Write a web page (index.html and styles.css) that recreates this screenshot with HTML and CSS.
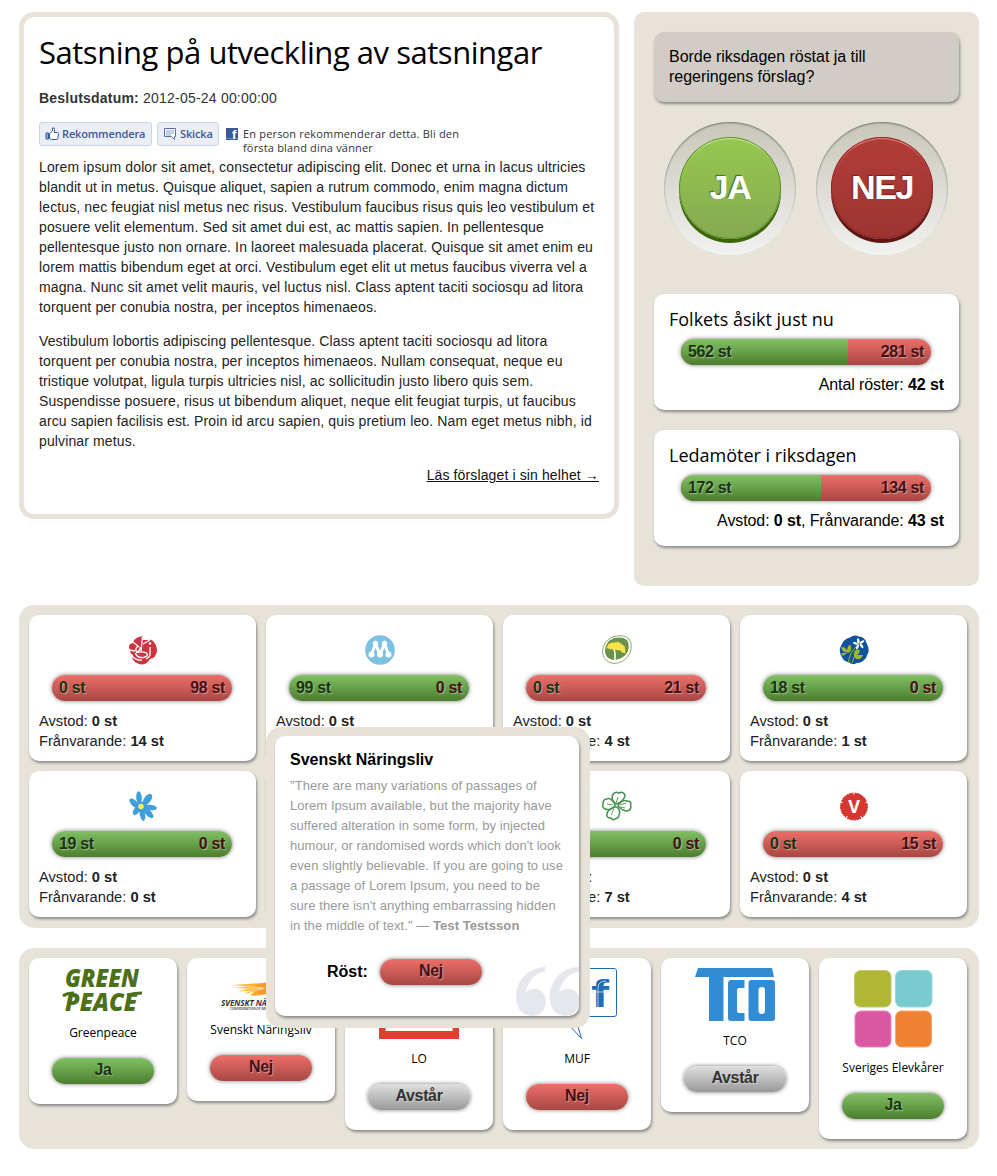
FILE: index.html
```html
<!DOCTYPE html>
<html lang="sv">
<head>
<meta charset="utf-8">
<title>Satsning på utveckling av satsningar</title>
<link rel="stylesheet" href="styles.css">
</head>
<body>
<div class="page">
  <div class="top">
    <article class="proposal">
      <h1>Satsning på utveckling av satsningar</h1>
      <p class="date"><b>Beslutsdatum:</b> 2012-05-24 00:00:00</p>
      <div class="social">
        <a class="fb-button like"><svg width="14" height="14" viewBox="0 0 14 14"><path d="M1 6h2.500v6H1z" fill="#8ea2cc" stroke="#3b5998"/><path d="M4.500 6.500 7.500 4V1q2-1 2 1.500V5.500h3q1 0 1 1.200l-.7 5q-.2.800-1 .8H6.500l-2-1z" fill="#fff" stroke="#3b5998"/></svg><span>Rekommendera</span></a>
        <a class="fb-button send"><svg width="14" height="14" viewBox="0 0 14 14"><path d="M1.500 1.500h11v8h-1v3l-3-3h-7z" fill="#fff" stroke="#5470a8"/><path d="M3 4h8M3 6h8M3 8h5" stroke="#8d9fc5"/></svg><span>Skicka</span></a>
        <svg class="fb-logo" width="12" height="12" viewBox="0 0 12 12"><path d="M0 0h12v12H0z" fill="#3b5998"/><path d="M0 10.500h12" stroke="#7489b8"/><text x="6" y="11" class="fb-f">f</text></svg>
        <p class="fb-text">En person rekommenderar detta. Bli den<br>första bland dina vänner</p>
      </div>
      <p class="body-text">Lorem ipsum dolor sit amet, consectetur adipiscing elit. Donec et urna in lacus ultricies<br>blandit ut in metus. Quisque aliquet, sapien a rutrum commodo, enim magna dictum<br>lectus, nec feugiat nisl metus nec risus. Vestibulum faucibus risus quis leo vestibulum et<br>posuere velit elementum. Sed sit amet dui est, ac mattis sapien. In pellentesque<br>pellentesque justo non ornare. In laoreet malesuada placerat. Quisque sit amet enim eu<br>lorem mattis bibendum eget at orci. Vestibulum eget elit ut metus faucibus viverra vel a<br>magna. Nunc sit amet velit mauris, vel luctus nisl. Class aptent taciti sociosqu ad litora<br>torquent per conubia nostra, per inceptos himenaeos.</p>
      <p class="body-text">Vestibulum lobortis adipiscing pellentesque. Class aptent taciti sociosqu ad litora<br>torquent per conubia nostra, per inceptos himenaeos. Nullam consequat, neque eu<br>tristique volutpat, ligula turpis ultricies nisl, ac sollicitudin justo libero quis sem.<br>Suspendisse posuere, risus ut bibendum aliquet, neque elit feugiat turpis, ut faucibus<br>arcu sapien facilisis est. Proin id arcu sapien, quis pretium leo. Nam eget metus nibh, id<br>pulvinar metus.</p>
      <p class="more"><a>Läs förslaget i sin helhet →</a></p>
    </article>

    <aside class="vote">
      <div class="question">Borde riksdagen röstat ja till<br>regeringens förslag?</div>
      <div class="buttons">
        <div class="ring"><div class="round yes">JA</div></div>
        <div class="ring"><div class="round no">NEJ</div></div>
      </div>
      <section class="result">
        <h2>Folkets åsikt just nu</h2>
        <div class="bar red"><i class="green" style="width:66.8%"></i><b class="for">562 st</b><b class="against">281 st</b></div>
        <p>Antal röster: <b>42 st</b></p>
      </section>
      <section class="result">
        <h2>Ledamöter i riksdagen</h2>
        <div class="bar red"><i class="green" style="width:56%"></i><b class="for">172 st</b><b class="against">134 st</b></div>
        <p>Avstod: <b>0 st</b>, Frånvarande: <b>43 st</b></p>
      </section>
    </aside>
  </div>

  <div class="parties">
    <div class="party">
      <svg viewBox="0 0 30 30"><path d="M6 5Q9 2 14 1L15 0V5L20 5Q23 4 25 6Q29 10 29 16Q28 23 22 24Q19 29.500 13 29.500Q6 28 4 23L5 20Q2 19 2 15Q0 12 2 9Q5 9 6 5z" fill="#cf3340"/><path d="M14.500 1 13 17M5 7l6 5M15 9l7-4M1 15l6 1M10.500 11q-4 2-2 6 4-1 3.500-5M7.500 18q1 5 8 4.500 6-1.500 3-4.500-4-2-10-.5M3 20q5 6 11 5M22 12v8q-1 3-4 4" fill="none" stroke="#fff" stroke-width="1.300"/><circle cx="22" cy="8.500" r="1.300" fill="#fff"/></svg>
      <div class="bar red"><b class="for">0 st</b><b class="against">98 st</b></div>
      <p>Avstod: <b>0 st</b><br>Frånvarande: <b>14 st</b></p>
    </div>
    <div class="party">
      <svg viewBox="0 0 30 30"><circle cx="15" cy="15" r="14.800" fill="#7cc0e2"/><g fill="#fff"><circle cx="10.500" cy="8.500" r="2.700"/><circle cx="19.500" cy="8.500" r="2.700"/><circle cx="6.500" cy="19.500" r="3"/><circle cx="15" cy="19.500" r="3"/><circle cx="23.500" cy="19.500" r="3"/></g><path d="M6.500 19 10.500 9 15 19.500 19.500 9 23.500 19" fill="none" stroke="#fff" stroke-width="3"/></svg>
      <div class="bar green"><b class="for">99 st</b><b class="against">0 st</b></div>
      <p>Avstod: <b>0 st</b><br>Frånvarande: <b>8 st</b></p>
    </div>
    <div class="party">
      <svg viewBox="0 0 30 30"><path d="M.500 17Q1 5 12 1.500Q22-1 27 4Q31 9 28 18Q23 28 12 28.500Q1 27 .500 17z" fill="#fff" stroke="#75974b" stroke-width=".8"/><path d="M3 16Q3 7 11 3.500Q20 1 25 5Q28.500 11 25 18Q20 25 11 25Q3 23 3 16z" fill="#6a9248"/><path d="M12.500 25.500Q14 21 12 14" fill="none" stroke="#fff" stroke-width="1.600"/><path d="M5 13l1-3 3-2 3 0 4-1 3 2 3 2 1 3 0 4-3-1-2-2-3 0-3-1-4 0-2-1z" fill="#fce148" stroke="#fce148" stroke-dasharray="1 .6"/></svg>
      <div class="bar red"><b class="for">0 st</b><b class="against">21 st</b></div>
      <p>Avstod: <b>0 st</b><br>Frånvarande: <b>4 st</b></p>
    </div>
    <div class="party">
      <svg viewBox="0 0 30 30"><path d="M4 7Q7 3 11 2.500Q15-1 20 1.500Q26 2 27.500 8Q30 12 29.500 17Q28 20 27 23Q23 28 18 28Q14 30.500 10 27.500Q4 26 3 22Q0 18 1 13z" fill="#10529d"/><path d="M9.500 28Q10 18 18 11M13 28l3-8" fill="none" stroke="#a3b928"/><path d="M2 12.500q5-1 6 4 0-5 3-7 3 5-1 8-6 1-8-5M15 18q1-5 6-3 0 3-3 5l6 0q-2 5-6 4-4-1-3-6M2 18l6 0-4 3z" fill="#a3b928"/><g fill="#fff"><ellipse cx="19.300" cy="6" rx="1.300" ry="2.700" transform="rotate(-10 19.300 6)"/><ellipse cx="23" cy="7" rx="1.200" ry="2.500" transform="rotate(60 23 7)"/><ellipse cx="22.500" cy="10.800" rx="1.200" ry="2.800" transform="rotate(-35 22.500 10.800)"/><ellipse cx="18.500" cy="11.800" rx="1.200" ry="2.800" transform="rotate(25 18.500 11.800)"/><ellipse cx="16.500" cy="8.300" rx="1.200" ry="2.700" transform="rotate(-75 16.500 8.300)"/></g><circle cx="19.800" cy="8.800" r="1" fill="#92a955"/></svg>
      <div class="bar green"><b class="for">18 st</b><b class="against">0 st</b></div>
      <p>Avstod: <b>0 st</b><br>Frånvarande: <b>1 st</b></p>
    </div>
    <div class="party">
      <svg viewBox="0 0 30 30"><g fill="#3f9fdd"><ellipse cx="11" cy="6.500" rx="2.800" ry="6.300" transform="rotate(-4 11 6.500)"/><ellipse cx="19.500" cy="8.500" rx="3.500" ry="6.500" transform="rotate(36 19.500 8.500)"/><ellipse cx="22" cy="16.500" rx="7" ry="2.800" transform="rotate(5 22 16.500)"/><ellipse cx="20.500" cy="22" rx="2.900" ry="6.500" transform="rotate(-43 20.500 22)"/><ellipse cx="14.500" cy="23.500" rx="2.700" ry="6.500" transform="rotate(-10 14.500 23.500)"/><ellipse cx="8.500" cy="19.500" rx="2.800" ry="5" transform="rotate(32 8.500 19.500)"/><ellipse cx="6.500" cy="12.500" rx="3" ry="6.500" transform="rotate(-46 6.500 12.500)"/><circle cx="13.500" cy="16" r="5.500"/></g><circle cx="13" cy="15.500" r="2.700" fill="#fff04d"/></svg>
      <div class="bar green"><b class="for">19 st</b><b class="against">0 st</b></div>
      <p>Avstod: <b>0 st</b><br>Frånvarande: <b>0 st</b></p>
    </div>
    <div class="party">
      <svg viewBox="0 0 30 30"></svg>
      <div class="bar green"><b class="for">20 st</b><b class="against">0 st</b></div>
      <p>Avstod: <b>0 st</b><br>Frånvarande: <b>4 st</b></p>
    </div>
    <div class="party">
      <svg viewBox="0 0 30 30"><g fill="none" stroke="#43914c" stroke-width="1.500"><path d="M14 13Q9 9 10.500 4Q13 0 17 2Q21 0 23 4Q23 8 17 12z"/><path d="M16 14Q21 8 25 10Q30 10 28.500 14Q30 19 25 20Q21 20 17 16z"/><path d="M15 16Q19 20 17 24Q17 27 13 28Q11 30 9 27Q4 27 5 23Q5 19 13 16z"/><path d="M13 15Q7 20 3 18Q0 17 1 13Q1 8 5 8Q8 6 13 13z"/><path d="M14 12 16 6M18 14l6-2M18 16l5 1M12 18l-3 6M11 14l-6-1" stroke-width=".9"/></g></svg>
      <div class="bar green"><b class="for">17 st</b><b class="against">0 st</b></div>
      <p>Avstod: <b>0 st</b><br>Frånvarande: <b>7 st</b></p>
    </div>
    <div class="party">
      <svg viewBox="0 0 30 30"><circle cx="15" cy="15.500" r="13.300" fill="#d5362f"/><circle cx="15" cy="15.500" r="13.300" fill="none" stroke="#d5362f" stroke-width="1.300" stroke-dasharray="2 .6"/><path d="M15 1v2.500M29 11l-2.500 .8M23.500 28l-2-3M6.500 28l2-3M1 11l2.500 .8" stroke="#fff" stroke-width="1"/><text x="15" y="21.500" class="v-mark">V</text></svg>
      <div class="bar red"><b class="for">0 st</b><b class="against">15 st</b></div>
      <p>Avstod: <b>0 st</b><br>Frånvarande: <b>4 st</b></p>
    </div>
  </div>

  <div class="orgs">
    <div class="org">
      <svg class="gp-logo" width="80" height="45" viewBox="0 0 80 45"><g class="gp"><text x="2" y="19" textLength="74" lengthAdjust="spacingAndGlyphs">GREEN</text><text x="2" y="43" textLength="72" lengthAdjust="spacingAndGlyphs">PEACE</text></g><path d="M0 28Q4 25 11 25M64 27q8-2 15-2" fill="none" stroke="#4c7018" stroke-width="3"/></svg>
      <h3>Greenpeace</h3>
      <div class="bar green answer">Ja</div>
    </div>
    <div class="org">
      <svg width="80" height="42" viewBox="0 0 80 42"><defs><linearGradient id="sun" gradientUnits="userSpaceOnUse" x1="9" y1="0" x2="60" y2="0"><stop stop-color="#fddc43"/><stop offset=".6" stop-color="#f7a023"/><stop offset="1" stop-color="#ef7b19"/></linearGradient></defs><path d="M10 17l16 1.500-14 1.500 15 .5-10 3 13-1-8 4 11-3-4 4q14 1 25-5 8-4 9-12-16 5-30 5z" fill="url(#sun)"/><path d="M24 18.500l20 1.500M25 21l18-.5M29 23.500l13-2.500" stroke="#fff" stroke-width=".5"/><text x="0" y="37.500" class="sn">SVENSKT NÄRINGSLIV</text><text x="9" y="41.500" class="sn-sub">CONFEDERATION OF SWEDISH</text></svg>
      <h3>Svenskt Näringsliv</h3>
      <div class="bar red answer">Nej</div>
    </div>
    <div class="org">
      <svg width="80" height="71" viewBox="0 0 80 71"><path d="M0 0h80v71H0z" fill="#e63c32"/><path d="M6.500 6h67v57h-67z" fill="#fff"/><path d="M0 0h80v60H0z" fill="#e63c32"/></svg>
      <h3>LO</h3>
      <div class="bar grey answer">Avstår</div>
    </div>
    <div class="org">
      <svg width="80" height="71" viewBox="0 0 80 71"><path d="M3 .500h74q2.500 0 2.500 2v44q0 2-2.500 2H38l6.500 22-17-18-9-4H3q-2.500 0-2.500-2v-44q0-2 2.500-2z" fill="#fff" stroke="#1e6cb5"/><text x="7" y="38" class="muf">mu</text><text x="54" y="39" class="muf f" textLength="18" lengthAdjust="spacingAndGlyphs">f</text><path d="M61 39V20q0-7 8-7M55 24h17" fill="none" stroke="#d3e4f3" stroke-width=".8"/></svg>
      <h3>MUF</h3>
      <div class="bar red answer">Nej</div>
    </div>
    <div class="org">
      <svg width="80" height="53" viewBox="0 0 80 53"><path d="M3 0h74l2 9H0z" fill="#318cd4"/><path d="M14 8h14.500v45H14z" fill="#318cd4"/><rect x="53.500" y="12" width="26.500" height="41" rx="3" fill="#318cd4"/><rect x="63.500" y="19" width="6.500" height="27" rx="3.200" fill="#fff"/><path d="M49.500 12H36Q33 12 33 15.500V50q0 3 3 3h13.500v-8H44q-2 0-2-3V23q0-3 2-3h5.500z" fill="#318cd4"/></svg>
      <h3>TCO</h3>
      <div class="bar grey answer">Avstår</div>
    </div>
    <div class="org">
      <svg width="80" height="80" viewBox="0 0 80 80"><g stroke-width="1"><rect x="1.500" y="2.500" width="36.500" height="36.500" rx="6" fill="#afb735" stroke="#c2c96b"/><rect x="42.500" y="2.500" width="36.500" height="36.500" rx="6" fill="#77cbd1" stroke="#9adadd"/><rect x="2" y="43" width="36" height="36" rx="6" fill="#da57a2" stroke="#e384bb"/><rect x="42.500" y="43" width="36" height="36" rx="6" fill="#ef8232" stroke="#f5a56e"/></g></svg>
      <h3>Sveriges Elevkårer</h3>
      <div class="bar green answer">Ja</div>
    </div>

    <div class="popup">
      <div class="popup-card">
        <h4>Svenskt Näringsliv</h4>
        <p class="quote">"There are many variations of passages of<br>Lorem Ipsum available, but the majority have<br>suffered alteration in some form, by injected<br>humour, or randomised words which don't look<br>even slightly believable. If you are going to use<br>a passage of Lorem Ipsum, you need to be<br>sure there isn't anything embarrassing hidden<br>in the middle of text." — <b>Test Testsson</b></p>
        <div class="ballot"><b>Röst:</b><div class="bar red answer">Nej</div></div>
        <svg class="marks" width="63" height="49" viewBox="0 0 63 49"><defs><path id="mark" d="M29.500 0V4.500C19 6 12.500 14 9.500 25Q14 21.500 20 22Q30 24 30 35Q29 48 16 49Q1 48 0 30C1 12 12 1 29.500 0z"/></defs><g fill="#e6e7ec"><use href="#mark"/><use href="#mark" x="33.500"/></g></svg>
      </div>
    </div>
  </div>
</div>
</body>
</html>
```
FILE: styles.css
```css
* { box-sizing: border-box; }
body { margin: 0; background: #fff; color: #222; font-family: "Liberation Sans", Arial, sans-serif; }
h1, h2, h3, h4, p { margin: 0; }
.page { width: 960px; margin: 12px 0 0 19px; white-space: nowrap; }
.top { display: flex; justify-content: space-between; align-items: flex-start; }

.proposal { width: 600px; height: 507px; padding: 15px; border: 5px solid #e7e3d8; border-radius: 15px; font-size: 14px; line-height: 20px; letter-spacing: .125px; }
.proposal h1 { color: #000; font: 400 31px/40px "Open Sans", sans-serif; letter-spacing: -.47px; }
.date { margin-top: 16px; color: #333; letter-spacing: .21px; }
.social { display: flex; height: 35px; margin-top: 14px; font: 11px/14px "Open Sans", sans-serif; color: #333; letter-spacing: 0; }
.fb-button { display: flex; align-items: center; height: 24px; padding: 0 5px; border: 1px solid #cad4e7; border-radius: 3px; background: #eceef5; color: #3b5998; font-weight: 600; letter-spacing: -.15px; }
.fb-button svg { margin-right: 3px; flex: none; }
.like { width: 113px; margin-right: 5px; }
.send { width: 62px; margin-right: 7px; }
.fb-logo { margin: 6px 5px 0 0; }
.fb-f { font: bold 13px "Liberation Sans", sans-serif; fill: #fff; }
.fb-text { padding-top: 5px; letter-spacing: .17px; }
.body-text + .body-text { margin-top: 14px; }
.more { margin-top: 14px; text-align: right; }
.more a { color: #111; text-decoration: underline; }

.vote { width: 345px; height: 574px; padding: 20px; border-radius: 10px; background: #e7e3d8; color: #000; }
.question { width: 305px; height: 70px; padding: 15px; border-radius: 10px; background: #d1ccc5; font-size: 16px; line-height: 20px; letter-spacing: -.03px; box-shadow: 1px 2px 3px #888; }
.buttons { display: flex; gap: 20px; padding: 20px 10px 0; height: 192px; }
.ring { width: 132px; height: 133px; padding: 15px; border-radius: 50%; background: linear-gradient(#c9c6b9, #f1f1f1); box-shadow: inset 0 1px 2px #77756c, inset 0 -1px 1px #fff; }
.round { width: 102px; height: 102px; border-radius: 50%; color: #fff; font-weight: bold; font-size: 34px; line-height: 101px; letter-spacing: -1.300px; text-align: center; }
.yes { background: linear-gradient(#96c850, #84aa50); box-shadow: 0 4px 0 #3c650a, inset 0 0 0 1px #5f8c25, inset 0 2px 1px #d2eaa8; text-shadow: -1px -1px 1px #476d18; }
.no { background: linear-gradient(#b33c37, #9b3532); box-shadow: 0 4px 0 #5c1715, inset 0 0 0 1px #8d2220, inset 0 2px 1px #e2918d; text-shadow: -1px -1px 1px #7c1b19; }
.result { width: 305px; height: 116px; padding: 12px 15px; border-radius: 10px; background: #fff; box-shadow: 1px 2px 3px #888; }
.result + .result { margin-top: 20px; }
.result h2 { font: 400 18px/26px "Open Sans", sans-serif; }
.result .bar { width: 250px; margin: 7px auto 10px 12px; }
.result p { font-size: 16px; line-height: 20px; letter-spacing: -.1px; text-align: right; }

.bar { position: relative; display: flex; justify-content: space-between; height: 26px; padding: 0 7px; border-radius: 13px; font-weight: bold; font-size: 16px; line-height: 25px; letter-spacing: -.35px; box-shadow: 0 0 4px #777; text-shadow: 1px 1px 1px rgba(255, 255, 255, .4); }
.bar i { position: absolute; left: 0; top: 0; height: 26px; border-radius: 13px 0 0 13px; }
.bar b { position: relative; }
.green { background: linear-gradient(#81c165, #4c7e2e); color: #1b330c; }
.red { background: linear-gradient(#ec6f6a, #a84743); color: #471010; }
.grey { background: linear-gradient(#e0e0e0, #999); color: #333; }
.for { color: #1b330c; }
.against { color: #471010; }

.parties { display: grid; grid-template-columns: repeat(4, 227px); grid-auto-rows: 146px; gap: 10px; height: 323px; margin-top: 19px; padding: 10px; border-radius: 15px; background: #e7e3d8; }
.party { padding: 20px 10px; border-radius: 10px; background: #fff; box-shadow: 1px 2px 3px #888; }
.party svg { display: block; width: 30px; height: 30px; margin: 0 auto; }
.party .bar { width: 180px; margin: 10px auto 10px 13px; }
.party p { font-size: 14.700px; line-height: 20px; }
.v-mark { font: bold 18px "Open Sans", sans-serif; fill: #fff; text-anchor: middle; }

.orgs { position: relative; display: flex; align-items: flex-start; gap: 10px; height: 201px; margin-top: 20px; padding: 10px; border-radius: 15px; background: #e7e3d8; }
.org { width: 148px; padding: 10px 0 20px; border-radius: 10px; background: #fff; box-shadow: 1px 2px 3px #888; text-align: center; }
.org svg { display: block; margin: 0 auto; }
.org .gp-logo { overflow: visible; }
.org h3 { margin: 11px 0 16px; color: #000; font: 400 12px/18px "Open Sans", sans-serif; }
.answer { width: 102px; margin: 0 auto; justify-content: center; line-height: 24px; }
.gp { font: italic 800 25px "Open Sans", sans-serif; fill: #4c7018; }
.sn { font: italic bold 8px "Open Sans", sans-serif; fill: #333; }
.sn-sub { font: bold 3px "Open Sans", sans-serif; fill: #555; }
.muf { font: bold 30px "Liberation Sans", sans-serif; fill: #1e6cb5; }
.muf.f { font-size: 39px; }

.popup { position: absolute; left: 247px; top: -221px; width: 324px; height: 301px; padding: 9px 10px 11px 9px; border-radius: 15px; background: #e7e3d8; }
.popup-card { position: relative; width: 304px; height: 280px; padding: 14px 15px; border-radius: 10px; background: #fff; box-shadow: 1px 2px 3px #888; overflow: hidden; }
.popup h4 { color: #000; font-size: 16px; line-height: 20px; }
.quote { margin-top: 6px; color: #999; font-size: 13px; line-height: 20px; letter-spacing: .07px; }
.ballot { display: flex; gap: 12px; margin: 23px 0 0 37px; color: #000; font-size: 16px; line-height: 25px; }
.ballot .answer { margin: 0; }
.marks { position: absolute; right: 0; bottom: 0; }
```
